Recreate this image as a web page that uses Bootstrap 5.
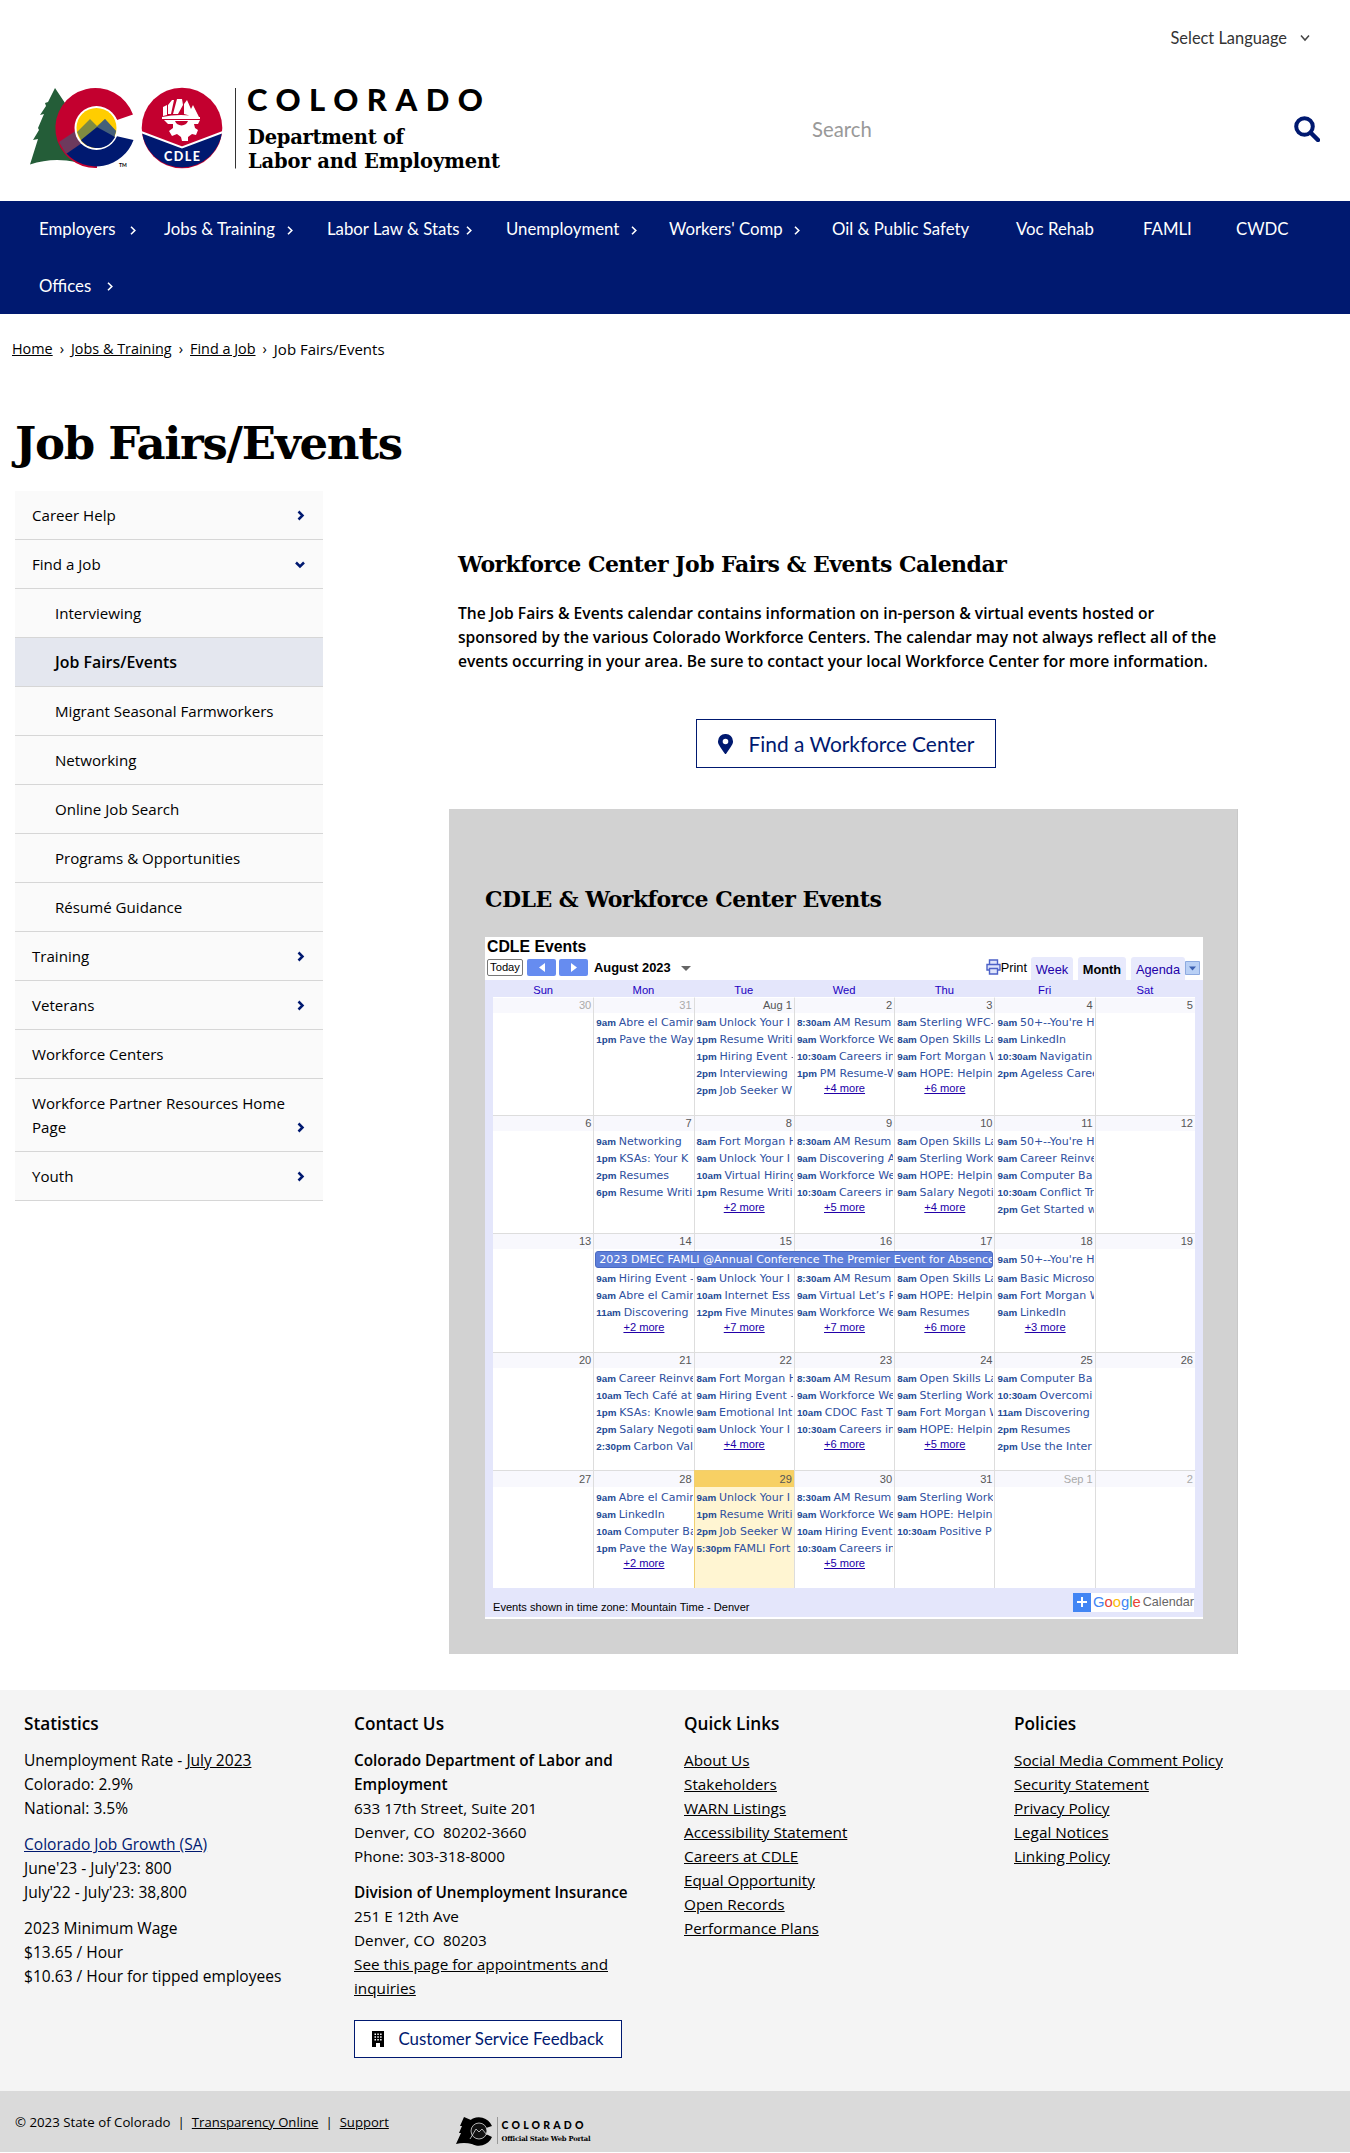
<!DOCTYPE html>
<html lang="en">
<head>
<meta charset="utf-8">
<meta name="viewport" content="width=device-width, initial-scale=1">
<title>Job Fairs/Events | Department of Labor &amp; Employment</title>
<link href="https://cdn.jsdelivr.net/npm/bootstrap@5.3.0/dist/css/bootstrap.min.css" rel="stylesheet">
<style>
:root{--navy:#001970}
body{font-family:"Open Sans","Noto Sans",sans-serif;font-size:15.3px;line-height:24px;color:#000;background:#fff}
a{color:inherit}
.font-lato{font-family:Lato,sans-serif}
.font-slab{font-family:"DejaVu Serif",serif;font-weight:700}
.lang-bar{height:76px;padding-right:40px;font-size:16.4px;color:#333}
.lang-bar svg{margin-left:13px}
.masthead{height:125px;padding-left:28px;padding-right:30px}
.search-box{width:508px;margin-top:-17px}
.search-box input{font-size:20.3px;color:#999;padding:0;border:0;background:none}
.search-box input::placeholder{color:#999;opacity:1}
.main-nav{background:var(--navy);height:113px;padding:0 15px;font-size:16.8px;color:#fff}
.main-nav .nav-item{height:56.5px;padding-left:24px;white-space:nowrap}
.main-nav .nav-link{color:#fff;padding:0}
.crumbs{height:73px;padding:0 0 3px 12px;font-size:14.4px}
.crumbs .sep{margin:0 7px}
.crumbs .here{font-size:15px}
.page-title{font-size:45px;line-height:54px;letter-spacing:-1.3px;margin:30px 0 20px 15px}
.side-menu{width:308px;margin-left:15px;background:#fafafa}
.side-menu a{border:0;border-bottom:1px solid #d6d6d6;padding:12px 17px;color:#000;background:#fafafa;font-size:15.1px;line-height:24px}
.side-menu a.nested{padding-left:40px}
.side-menu a.current{background:#e4e7ef;font-weight:600;font-size:15.9px}
.content-col{margin-left:126px;width:789px;padding-top:57px}
h2.section{font-size:22px;line-height:32px;letter-spacing:-.53px;margin:0}
.intro{font-weight:600;font-size:15.63px;margin:21px 0 0 9px;width:775px}
.btn-outline-navy{border:1px solid var(--navy);border-radius:0;color:var(--navy);background:#fff;padding:0}
.btn-find{width:300px;height:49px;font-size:20.9px;margin:46px 0 0 247px}
.events-panel{background:#d2d2d2;height:845px;margin-top:41px;padding:74px 36px 0;border-right:1px solid #c8c8c8}
.gcal{font-family:"Liberation Sans",Arial,sans-serif;width:718px;height:682px;margin-top:22px;background:#fff;overflow:hidden;line-height:1}
.gcal-title{font-size:15.8px;font-weight:700;padding:2px 0 0 2px;height:22px;line-height:15px}
.gcal-tools{height:21px;padding:0 3px 0 2px}
.gcal-tools .today{width:36px;height:17px;border:1px solid #777;border-radius:2px;font-size:11.2px;background:#fff;line-height:15px;text-align:center}
.gcal-tools .arrow{width:29px;height:17px;background:#668cf0;border-radius:2px}
.gcal-tools .month-name{font-size:12.9px;font-weight:700;line-height:17px}
.gcal-tools .view{background:#e8eafc;color:#2200a8;font-size:12.8px;height:23px;line-height:25px;text-align:center;border-radius:3px 3px 0 0}
.gcal-body{background:#e4e6fb;height:637px;padding:0 8px}
.day-names{height:17px;font-size:11.2px;color:#2200c0;line-height:20px}
.day-names,.week{display:grid;grid-template-columns:repeat(6,100.3px) 1fr}
.weeks{background:#fff}
.week{height:118.2px}
.day-cell{border-left:1px solid #ddd;border-top:1px solid #ddd;min-width:0}
.day-cell:first-child{border-left:0}
.week:first-child .day-cell{border-top-color:#fff}
.week:first-child .date{margin-bottom:1px}
.week:nth-child(4) .date{margin-bottom:2px}
.week:last-child .date{height:16px;line-height:16px;margin-bottom:2px}
.date{height:15px;background:#f8f8fd;text-align:right;font-size:11.1px;line-height:15px;padding-right:2px;color:#555;margin-bottom:1.5px}
.off{color:#aaa}
.ev{height:17px;line-height:17px;padding-left:2px;font-family:"DejaVu Sans",sans-serif;font-size:11px;color:#2f50a0;white-space:nowrap;overflow:hidden;margin-right:1px}
.ev b{font-family:"Liberation Sans",sans-serif;font-size:9.8px;color:#234a94;margin-right:-.7px}
.more-link{text-align:center;font-size:11.1px;color:#2200a8;text-decoration:underline;line-height:13px;height:13px}
.today-cell{background:#fff5d2;border-color:#f0cf70}
.today-cell .date{background:#f7d064}
.span-ev{width:398px;height:17.5px;margin:0 0 1.5px 1px;border-radius:3px;background:#5d7ed9;border:1px solid #4a6ac2;color:#fff;font:400 11.1px/16px "DejaVu Sans",sans-serif;padding-left:3px;white-space:nowrap;overflow:hidden;position:relative}
.span-gap{height:19px}
.gcal-foot{height:29px;font-size:11.1px;padding:0 1px 0 0}
.gbadge{background:#fff;width:121px;height:19px;font-size:14.8px;color:#666}
.gbadge .plus{width:18px;height:19px;background:#4285f4}
.site-footer{background:#f4f4f4;height:401px;margin-top:36px;padding:22px 0 0 24px}
.site-footer .fcol{width:330px;padding-right:50px}
.site-footer .stats p{font-size:15.55px}
.site-footer h3{font-size:17.2px;font-weight:600;line-height:24px;margin:0 0 12px}
.site-footer p{margin:0 0 12px}
.site-footer strong{font-weight:600;white-space:nowrap}
.btn-feedback{width:268px;height:38px;font-size:16.9px;margin-top:20px}
.legal-bar{background:#dadada;height:61px;padding-left:15px;font-size:13.25px}
.legal-bar a{font-size:13.1px}
.legal-bar .bar{margin:0 7px}
</style>
</head>
<body>
<header class="font-lato">
  <div class="lang-bar d-flex align-items-center justify-content-end">Select Language
    <svg width="10" height="8" viewBox="0 0 10 8"><path d="M1 1.500 5 6l4-4.500" fill="none" stroke="#444" stroke-width="1.500"/></svg>
  </div>
  <div class="masthead d-flex justify-content-between align-items-start">
    <svg width="480" height="105" viewBox="28 76 480 105">
      <path d="M55 88 48 102 45 103 46 106 40 115 44 114 38 128 39 130 33 140 38 139 30 164.500Q52 157 76 162L72 100 65 103Z" fill="#245d38"/>
      <path d="M133 114.500A40 40 0 1 0 97 168V150A21 21 0 1 1 117 120Z" fill="#c3002f"/>
      <path d="M133.500 140 116 136 97 149 80 142 66 153A40 40 0 0 0 133.500 140Z" fill="#001970"/>
      <path d="M59 142 77 130 82 143 66 154Z" fill="#6d3a5d"/>
      <circle cx="96.500" cy="128" r="22" fill="#fff"/>
      <circle cx="96.500" cy="128" r="20" fill="#ffcd00"/>
      <path d="M77 132 90 119 97 126 105 119 116 131 114 138 97 128 82 142Z" fill="#7f8b41"/>
      <path d="M97 127 105 119 116 131 114 138Z" fill="#45607a"/>
      <path d="M81 140 97 127 115 137A20 20 0 0 1 81 140Z" fill="#001970"/>
      <text x="119" y="167" font-family="Lato" font-size="5" font-weight="700">TM</text>
      <circle cx="182" cy="128" r="40.300" fill="#c3002f"/>
      <path d="M142 132 182 147 222 132A40.300 40.300 0 0 1 142 132Z" fill="#001970"/>
      <path d="M141 132 182 147.500 223 132" fill="none" stroke="#fff" stroke-width="2"/>
      <path d="M163 116V107l4-2v10zM168 114V105l4-5 2 0-3 14zM173 114l4-15 5 0 1 6-5 9zM184 114V104l3-4 4 9 2-4 6 12-4 0zM162 117q19-4 38 0v2H162z" fill="#fff"/>
      <path d="M164 120h36l-2 4-4 0 1 4 3 2-2 5-4-1-4 3 0 4h-6l-1-4-4-3-5 2-3-5 4-3 0-4-5 0z" fill="#fff"/>
      <path d="M175 121a7 7 0 0 0 13 0z" fill="#c3002f"/>
      <text x="164" y="160.500" font-family="Lato" font-size="12.500" font-weight="900" fill="#fff" textLength="36">CDLE</text>
      <path d="M235.500 88V168.500" stroke="#333"/>
      <text x="247" y="110.800" font-family="Lato" font-size="31" font-weight="900" textLength="236">COLORADO</text>
      <text x="248" y="144.300" font-family="DejaVu Serif" font-size="19.500" font-weight="700" textLength="156">Department of</text>
      <text x="248" y="168.300" font-family="DejaVu Serif" font-size="19.500" font-weight="700" textLength="252">Labor and Employment</text>
    </svg>
    <form class="search-box d-flex align-items-center justify-content-between mt-4 pt-3">
      <input type="text" placeholder="Search" aria-label="Search">
      <svg width="26" height="26" viewBox="0 0 26 26"><circle cx="10.500" cy="10.500" r="8.300" fill="none" stroke="#001970" stroke-width="4"/><path d="m17 17 7 7" stroke="#001970" stroke-width="4.500" stroke-linecap="round"/></svg>
    </form>
  </div>
  <nav class="main-nav">
    <ul class="nav" id="mainNav"></ul>
  </nav>
</header>

<nav class="crumbs d-flex align-items-center" aria-label="breadcrumb">
  <a href="#">Home</a><span class="sep">›</span><a href="#">Jobs &amp; Training</a><span class="sep">›</span><a href="#">Find a Job</a><span class="sep">›</span><span class="here">Job Fairs/Events</span>
</nav>

<main>
  <h1 class="page-title font-slab">Job Fairs/Events</h1>
  <div class="d-flex align-items-start">
    <div class="side-menu list-group rounded-0 flex-shrink-0" id="sideMenu"></div>
    <div class="content-col flex-shrink-0">
      <h2 class="section font-slab" style="margin-left:9px">Workforce Center Job Fairs &amp; Events Calendar</h2>
      <p class="intro">The Job Fairs &amp; Events calendar contains information on in-person &amp; virtual events hosted or<br>sponsored by the various Colorado Workforce Centers. The calendar may not always reflect all of the<br>events occurring in your area. Be sure to contact your local Workforce Center for more information.</p>
      <a href="#" class="btn btn-outline-navy btn-find font-lato d-flex align-items-center justify-content-center">
        <svg class="me-3" width="15" height="20" viewBox="0 0 15 20"><path fill-rule="evenodd" d="M7.500 0A7.300 7.300 0 0 0 0 7.400C0 10 1 11 6.700 19.400q.8 1 1.600 0C14 11 15 10 15 7.400A7.300 7.300 0 0 0 7.500 0zm0 4.700a2.800 2.800 0 1 1 0 5.600 2.800 2.800 0 0 1 0-5.600z" fill="#001970"/></svg>Find a Workforce Center</a>
      <section class="events-panel">
        <h2 class="section font-slab">CDLE &amp; Workforce Center Events</h2>
        <div class="gcal">
          <div class="gcal-title">CDLE Events</div>
          <div class="gcal-tools d-flex align-items-start">
            <span class="today">Today</span>
            <span class="arrow ms-1 d-flex align-items-center justify-content-center"><svg width="6" height="9"><path d="M6 0v9L0 4.500z" fill="#fff"/></svg></span>
            <span class="arrow ms-1 d-flex align-items-center justify-content-center" style="margin-left:3px!important"><svg width="6" height="9"><path d="M0 0v9l6-4.500z" fill="#fff"/></svg></span>
            <span class="month-name" style="margin-left:6px">August 2023</span>
            <svg width="10" height="5" style="margin:7px 0 0 10px"><path d="M0 0h10L5 5z" fill="#666"/></svg>
            <span class="ms-auto d-flex align-items-start" style="font-size:12.800px;line-height:17px">
              <svg width="15" height="16" viewBox="0 0 15 16" class="flex-shrink-0"><path d="M3.500 5V1h8v4M3.500 11H1V5.500h13V11h-2.500M3.500 9.500h8V15h-8z" fill="#dfe4fb" stroke="#4d62c8" stroke-width="1.400"/></svg>Print</span>
            <span class="view" style="width:42px;margin:-2px 5px 0 4px">Week</span>
            <span class="view fw-bold text-black" style="width:48px;margin-top:-2px">Month</span>
            <span class="view" style="width:54px;margin:-2px 0 0 5px">Agenda</span>
            <svg width="15" height="14" style="margin-top:2px"><path d="M.5.5h14v13H.5z" fill="#b9d0f5" stroke="#8daae0"/><path d="M4 5.500h7L7.500 9.500z" fill="#3b5fb0"/></svg>
          </div>
          <div class="gcal-body">
            <div class="day-names text-center"><span>Sun</span><span>Mon</span><span>Tue</span><span>Wed</span><span>Thu</span><span>Fri</span><span>Sat</span></div>
            <div class="weeks" id="weeks"></div>
            <div class="gcal-foot d-flex align-items-start justify-content-between">
              <span style="margin-top:14px">Events shown in time zone: Mountain Time - Denver</span>
              <span class="gbadge d-flex align-items-center" style="margin-top:5px"><span class="plus d-flex align-items-center justify-content-center"><svg width="10" height="10"><path d="M5 0v10M0 5h10" stroke="#fff" stroke-width="2"/></svg></span><span style="margin-left:2px"><span style="color:#4285f4">G</span><span style="color:#ea4335">o</span><span style="color:#fbbc05">o</span><span style="color:#4285f4">g</span><span style="color:#34a853">l</span><span style="color:#ea4335">e</span></span><span style="margin-left:2px;font-size:12.600px">Calendar</span></span>
            </div>
          </div>
        </div>
      </section>
    </div>
  </div>
</main>

<footer>
  <div class="site-footer d-flex">
    <div class="fcol stats">
      <h3>Statistics</h3>
      <p>Unemployment Rate - <a href="#">July 2023</a><br>Colorado: 2.9%<br>National: 3.5%</p>
      <p><a href="#" style="color:#001970">Colorado Job Growth (SA)</a><br>June'23 - July'23: 800<br>July'22 - July'23: 38,800</p>
      <p>2023 Minimum Wage<br>$13.65 / Hour<br>$10.63 / Hour for tipped employees</p>
    </div>
    <div class="fcol">
      <h3>Contact Us</h3>
      <p><strong>Colorado Department of Labor and</strong><br><strong>Employment</strong><br>633 17th Street, Suite 201<br>Denver, CO&nbsp; 80202-3660<br>Phone: 303-318-8000</p>
      <p><strong>Division of Unemployment Insurance</strong><br>251 E 12th Ave<br>Denver, CO&nbsp; 80203<br><a href="#">See this page for appointments and<br>inquiries</a></p>
      <a href="#" class="btn btn-outline-navy btn-feedback font-lato d-flex align-items-center justify-content-center">
        <svg width="12" height="16" viewBox="0 0 12 16" style="margin-right:14px"><path d="M0 0h12v16H8v-4H4v4H0z"/><path d="M2.500 2.500h1.500V4H2.500zm2.800 0h1.500V4H5.300zm2.800 0h1.500V4H8.100zM2.500 5.200h1.500v1.500H2.500zm2.800 0h1.500v1.500H5.300zm2.800 0h1.500v1.500H8.100zM2.500 8h1.500v1.500H2.500zm2.800 0h1.500v1.500H5.300zm2.800 0h1.500v1.500H8.100z" fill="#fff"/></svg>Customer Service Feedback</a>
    </div>
    <div class="fcol">
      <h3>Quick Links</h3>
      <p><a href="#">About Us</a><br><a href="#">Stakeholders</a><br><a href="#">WARN Listings</a><br><a href="#">Accessibility Statement</a><br><a href="#">Careers at CDLE</a><br><a href="#">Equal Opportunity</a><br><a href="#">Open Records</a><br><a href="#">Performance Plans</a></p>
    </div>
    <div class="fcol">
      <h3>Policies</h3>
      <p><a href="#">Social Media Comment Policy</a><br><a href="#">Security Statement</a><br><a href="#">Privacy Policy</a><br><a href="#">Legal Notices</a><br><a href="#">Linking Policy</a></p>
    </div>
  </div>
  <div class="legal-bar d-flex align-items-center">
    <span>© 2023 State of Colorado</span><span class="bar">|</span><a href="#">Transparency Online</a><span class="bar">|</span><a href="#">Support</a>
    <svg width="140" height="34" viewBox="454 2113 140 34" style="margin:17px 0 0 66px">
      <path d="M463 2117l-4 9h2l-3 7h2l-5 11q8-2 16 0l4-8-5-16z"/>
      <path d="M491 2126A14.300 14.300 0 1 0 491 2137L485 2134A7.500 7.500 0 1 1 485 2128Z"/>
      <circle cx="478" cy="2131" r="8" fill="#111" stroke="#dadada" stroke-width=".8"/>
      <path d="M469 2139l6-10 3 3 3-3 5 6" fill="none" stroke="#dadada" stroke-width=".8"/>
      <path d="M496.500 2117v27" stroke="#888" stroke-width=".8"/>
      <text x="500.500" y="2129" font-family="Lato" font-weight="900" font-size="10.500" textLength="82">COLORADO</text>
      <text x="500.500" y="2141" font-family="DejaVu Serif" font-weight="700" font-size="6.800" textLength="89">Official State Web Portal</text>
    </svg>
  </div>
</footer>

<script src="https://cdn.jsdelivr.net/npm/bootstrap@5.3.0/dist/js/bootstrap.bundle.min.js"></script>
<script>
// Main navigation: label, item width, gap before the chevron (0 = no submenu)
const nav = [["Employers",125,15],["Jobs & Training",163,12],["Labor Law & Stats",179,7],["Unemployment",163,12],["Workers' Comp",163,11],["Oil & Public Safety",184,0],["Voc Rehab",127,0],["FAMLI",93,0],["CWDC",98,0],["Offices",125,16]];
document.getElementById('mainNav').innerHTML = nav.map(([t,w,g]) =>
  `<li class="nav-item d-flex align-items-center" style="width:${w}px"><a class="nav-link" href="#">${t.replace('&','&amp;')}</a>` +
  (g ? `<svg width="6" height="9" viewBox="0 0 6 9" style="margin:2px 0 0 ${g}px"><path d="M1 .8 4.800 4.500 1 8.200" fill="none" stroke="#fff" stroke-width="1.600"/></svg>` : '') + '</li>').join('');

// Side menu: label, level, arrow
const menu = [["Career Help",0,'r'],["Find a Job",0,'d'],["Interviewing",1],["Job Fairs/Events",1],["Migrant Seasonal Farmworkers",1],["Networking",1],["Online Job Search",1],["Programs & Opportunities",1],["Résumé Guidance",1],["Training",0,'r'],["Veterans",0,'r'],["Workforce Centers",0],["Workforce Partner Resources Home Page",0,'r'],["Youth",0,'r']];
const arrows = {r:'M3.500 1.500 7.500 5.500 3.500 9.500', d:'M1 3.500 5 7.500 9 3.500'};
document.getElementById('sideMenu').innerHTML = menu.map(([t,l,a]) =>
  `<a href="#" class="list-group-item d-flex justify-content-between align-items-end ${l?'nested':''} ${t==='Job Fairs/Events'?'current':''}"><span>${t.replace('&','&amp;')}</span>` +
  (a ? `<svg class="flex-shrink-0" width="11" height="11" viewBox="0 0 11 11" style="margin-bottom:6px"><path d="${arrows[a]}" fill="none" stroke="#001970" stroke-width="2.500"/></svg>` : '') + '</a>').join('');

// Calendar weeks: [date, events separated by |, number of hidden events]
const AM="8:30am AM Resum";
const weeks = [
 [["30"],["31","9am Abre el Camin|1pm Pave the Way"],["Aug 1","9am Unlock Your I|1pm Resume Writi|1pm Hiring Event -|2pm Interviewing|2pm Job Seeker W"],["2",AM+"|9am Workforce We|10:30am Careers in|1pm PM Resume-W",4],["3","8am Sterling WFC-|8am Open Skills La|9am Fort Morgan W|9am HOPE: Helpin",6],["4","9am 50+--You're H|9am LinkedIn|10:30am Navigatin|2pm Ageless Caree"],["5"]],
 [["6"],["7","9am Networking|1pm KSAs: Your K|2pm Resumes|6pm Resume Writi"],["8","8am Fort Morgan H|9am Unlock Your I|10am Virtual Hiring|1pm Resume Writi",2],["9",AM+"|9am Discovering A|9am Workforce We|10:30am Careers in",5],["10","8am Open Skills La|9am Sterling Work|9am HOPE: Helpin|9am Salary Negoti",4],["11","9am 50+--You're H|9am Career Reinve|9am Computer Ba|10:30am Conflict Tr|2pm Get Started w"],["12"]],
 [["13"],["14","SPAN|9am Hiring Event -|9am Abre el Camin|11am Discovering",2],["15","GAP|9am Unlock Your I|10am Internet Ess|12pm Five Minutes",7],["16","GAP|"+AM+"|9am Virtual Let’s P|9am Workforce We",7],["17","GAP|8am Open Skills La|9am HOPE: Helpin|9am Resumes",6],["18","9am 50+--You're H|9am Basic Microso|9am Fort Morgan W|9am LinkedIn",3],["19"]],
 [["20"],["21","9am Career Reinve|10am Tech Café at|1pm KSAs: Knowle|2pm Salary Negoti|2:30pm Carbon Val"],["22","8am Fort Morgan H|9am Hiring Event -|9am Emotional Int|9am Unlock Your I",4],["23",AM+"|9am Workforce We|10am CDOC Fast T|10:30am Careers in",6],["24","8am Open Skills La|9am Sterling Work|9am Fort Morgan W|9am HOPE: Helpin",5],["25","9am Computer Ba|10:30am Overcomi|11am Discovering|2pm Resumes|2pm Use the Inter"],["26"]],
 [["27"],["28","9am Abre el Camin|9am LinkedIn|10am Computer Ba|1pm Pave the Way",2],["29","9am Unlock Your I|1pm Resume Writi|2pm Job Seeker W|5:30pm FAMLI Fort"],["30",AM+"|9am Workforce We|10am Hiring Event|10:30am Careers in",5],["31","9am Sterling Work|9am HOPE: Helpin|10:30am Positive P"],["Sep 1"],["2"]]
];
function line(e, first, fri){
  if (e==='SPAN') return '<div class="span-ev">2023 DMEC FAMLI @Annual Conference The Premier Event for Absence</div>';
  if (e==='GAP') return '<div class="span-gap"></div>';
  const i = e.indexOf(' ');
  return `<div class="ev"${fri&&first?' style="height:19px"':''}><b>${e.slice(0,i)}</b> ${e.slice(i+1)}</div>`;
}
document.getElementById('weeks').innerHTML = weeks.map((w,r) => '<div class="week">' + w.map(([d,ev,more],c) => {
  const off = (r===0 && c<2) || (r===4 && c>4);
  return `<div class="day-cell ${r===4&&c===2?'today-cell':''}"><div class="date ${off?'off':''}">${d}</div>` +
    (ev ? ev.split('|').map((e,i) => line(e, i===0, r===2&&c===5)).join('') : '') +
    (more ? `<div class="more-link">+${more} more</div>` : '') + '</div>';
}).join('') + '</div>').join('');
</script>
</body>
</html>
